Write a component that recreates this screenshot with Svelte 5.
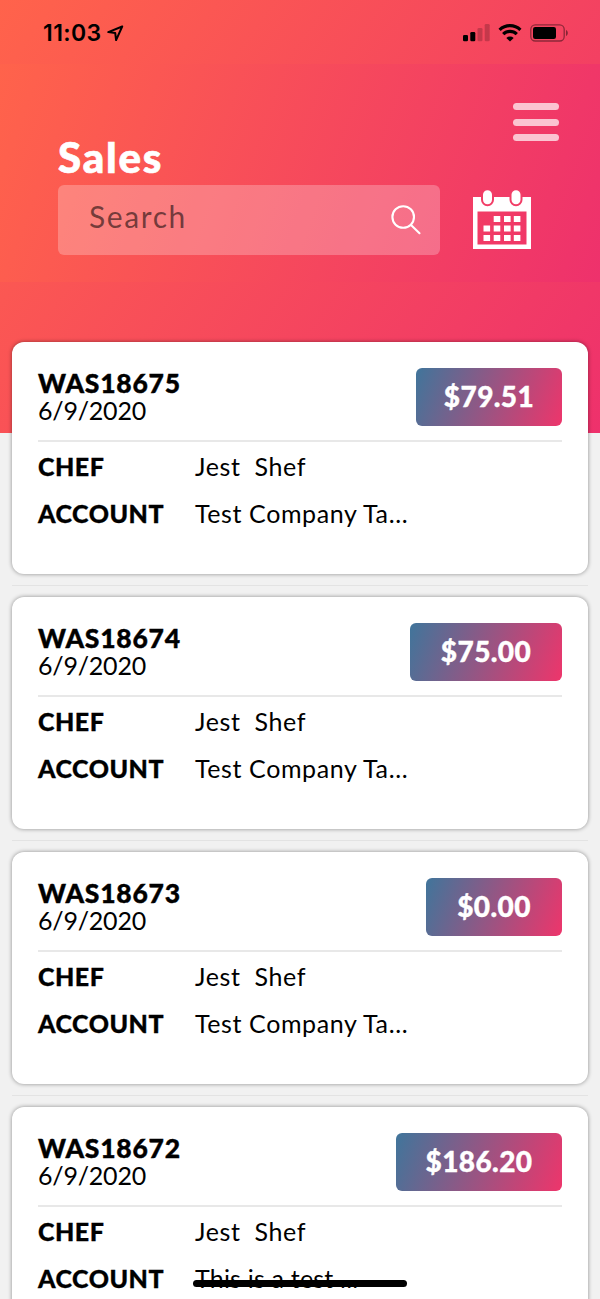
<script lang="ts">
  interface Sale {
    id: string
    date: string
    total: string
    chef: string
    account: string
    width: number
  }

  const sales: Sale[] = [
    { id: 'WAS18675', date: '6/9/2020', total: '$79.51', chef: 'Jest  Shef', account: 'Test Company Ta...', width: 146 },
    { id: 'WAS18674', date: '6/9/2020', total: '$75.00', chef: 'Jest  Shef', account: 'Test Company Ta...', width: 152 },
    { id: 'WAS18673', date: '6/9/2020', total: '$0.00', chef: 'Jest  Shef', account: 'Test Company Ta...', width: 136 },
    { id: 'WAS18672', date: '6/9/2020', total: '$186.20', chef: 'Jest  Shef', account: 'This is a test ...', width: 166 },
  ]

  // rows and first column of the day squares in the calendar icon
  const days = [
    { y: 47, from: 1 },
    { y: 56.5, from: 0 },
    { y: 66, from: 0 },
  ]
</script>

<div class="screen">
  <header>
    <div class="status">
      <span class="time">11:03</span>
      <svg class="location" width="17" height="17" viewBox="0 0 17 17">
        <path d="M15.2 1.5 1.3 7.1l6.9.8.9 7.2z" fill="none" stroke="#000" stroke-width="2" stroke-linejoin="round" />
      </svg>
      <svg class="signal" width="27" height="18" viewBox="0 0 27 18">
        <rect x="0" y="11" width="5" height="6.3" rx="1.3" />
        <rect x="7.3" y="8" width="5" height="9.3" rx="1.3" />
        <rect x="14.5" y="4" width="5" height="13.3" rx="1.3" opacity=".2" />
        <rect x="21.7" y="0" width="5" height="17.3" rx="1.3" opacity=".2" />
      </svg>
      <svg class="wifi" width="24" height="18" viewBox="0 0 24 18">
        <g fill="none" stroke="#000" stroke-width="3.2">
          <path d="M1.6 5.8a15 15 0 0 1 20.8 0" />
          <path d="M5.2 10.2a9.8 9.8 0 0 1 13.6 0" />
        </g>
        <path d="M8.3 13.9a5.4 5.4 0 0 1 7.4 0L12 17.6z" />
      </svg>
      <svg class="battery" width="39" height="18" viewBox="0 0 39 18">
        <rect x=".8" y=".8" width="33.4" height="16.2" rx="4.5" fill="none" stroke="#000" stroke-width="1.3" opacity=".42" />
        <rect x="3" y="3" width="23" height="12" rx="2.2" />
        <path d="M36 6v6c2.4-1 2.4-5 0-6z" opacity=".45" />
      </svg>
    </div>

    <div class="toolbar">
      <button class="menu" aria-label="Menu"><i></i><i></i><i></i></button>
      <h1>Sales</h1>
      <div class="tools">
        <div class="search">
          <span>Search</span>
          <svg width="32" height="32" viewBox="0 0 32 32" fill="none" stroke="#fff" stroke-width="2.1" stroke-linecap="round">
            <circle cx="13.2" cy="13" r="10.8" />
            <path d="M21 21l8.5 8.2" />
          </svg>
        </div>
        <svg class="calendar" width="58" height="60" viewBox="0 20 58 60">
          <path d="M0 27h58v52H0zM4.5 41.5v33h49v-33z" fill="#fff" fill-rule="evenodd" />
          <g fill="#fff" stroke="#f23d66" stroke-width="2">
            <rect x="9" y="19.2" width="11" height="16" rx="5.5" />
            <rect x="37.5" y="19.2" width="11" height="16" rx="5.5" />
          </g>
          {#each days as row}
            {#each [10.5, 20.7, 31, 40.8].slice(row.from) as x}
              <rect {x} y={row.y - 1} width="6.6" height="6" fill="#fff" />
            {/each}
          {/each}
        </svg>
      </div>
    </div>
  </header>

  <main>
    {#each sales as sale (sale.id)}
      <article>
        <div class="top">
          <div>
            <h2>{sale.id}</h2>
            <p class="date">{sale.date}</p>
          </div>
          <div class="total" style="width: {sale.width}px">{sale.total}</div>
        </div>
        <dl>
          <dt>CHEF</dt>
          <dd>{sale.chef}</dd>
          <dt>ACCOUNT</dt>
          <dd>{sale.account}</dd>
        </dl>
      </article>
      <hr />
    {/each}
  </main>

  <div class="home-bar"></div>
</div>

<style>
  :global(body) {
    margin: 0;
    background: #f1f1f1;
  }

  .screen {
    position: relative;
    width: 600px;
    height: 1299px;
    overflow: hidden;
    background: #f1f1f1;
    color: #000;
    font-family: Lato, sans-serif;
  }

  h1,
  h2,
  p,
  dl,
  dd {
    margin: 0;
  }

  header {
    height: 433px;
    background: linear-gradient(125.8deg, #ff634b, #ee316c);
  }

  .status {
    display: flex;
    height: 64px;
    box-sizing: border-box;
    padding: 24px 31px 0 43px;
  }

  .time {
    width: 64px;
    margin-top: -5px;
    font: 600 23px/28px Inter, sans-serif;
    letter-spacing: 0.4px;
  }

  .location {
    margin-top: 1px;
  }

  .signal {
    margin-left: auto;
  }

  .wifi {
    margin-left: 8px;
  }

  .battery {
    margin-left: 8px;
  }

  .toolbar {
    display: flex;
    flex-direction: column;
    height: 218px;
    box-sizing: border-box;
    padding: 39px 41px 0 58px;
    background: linear-gradient(110deg, #ff634b, #ee316c);
  }

  .menu {
    display: flex;
    flex-direction: column;
    align-self: flex-end;
    gap: 8.5px;
    padding: 0;
    border: 0;
    background: none;
  }

  .menu i {
    width: 46.5px;
    height: 7px;
    border-radius: 4px;
    background: rgba(255, 255, 255, 0.7);
  }

  h1 {
    height: 44px;
    color: #fff;
    font-size: 42px;
    font-weight: 900;
    line-height: 32px;
    letter-spacing: 1.8px;
    -webkit-text-stroke: 0.7px #fff;
  }

  .tools {
    display: flex;
    justify-content: space-between;
    padding-right: 28.5px;
  }

  .search {
    display: flex;
    justify-content: space-between;
    width: 382px;
    height: 70px;
    box-sizing: border-box;
    padding: 19px 18.5px 0 31px;
    border-radius: 6px;
    background: rgba(255, 255, 255, 0.25);
    color: rgba(0, 0, 0, 0.55);
    font-size: 30px;
    line-height: 25px;
    letter-spacing: 1.6px;
  }

  .calendar {
    margin-top: 5px;
  }

  main {
    position: relative;
    margin: -91px 12px 0;
  }

  article {
    height: 232px;
    box-sizing: border-box;
    padding: 26px;
    border-radius: 12px;
    background: #fff;
    box-shadow: 0 0 4px rgba(0, 0, 0, 0.42);
  }

  hr {
    height: 1px;
    margin: 11px 0;
    border: 0;
    background: #e3e3e3;
  }

  .top {
    display: flex;
    justify-content: space-between;
    height: 72px;
    border-bottom: 2px solid #e8e8e8;
  }

  h2 {
    margin-top: 2px;
    font-size: 26.5px;
    font-weight: 900;
    line-height: 27px;
    letter-spacing: 0.75px;
    -webkit-text-stroke: 0.4px #000;
  }

  .date {
    font-size: 25px;
    line-height: 27px;
    letter-spacing: -0.2px;
  }

  .total {
    height: 58px;
    border-radius: 6px;
    background: linear-gradient(111deg, #40759b, #ee356b);
    color: #fff;
    font-size: 28px;
    font-weight: 900;
    line-height: 56px;
    letter-spacing: 0.4px;
    text-align: center;
    -webkit-text-stroke: 0.4px #fff;
  }

  dl {
    display: grid;
    grid-template-columns: 157px 1fr;
    padding-top: 1px;
    font-size: 25px;
    line-height: 46.5px;
  }

  dt {
    font-weight: 900;
    letter-spacing: 0.5px;
    -webkit-text-stroke: 0.3px #000;
  }

  dd {
    letter-spacing: 0.6px;
    white-space: pre;
  }

  article:last-of-type dd:last-child {
    letter-spacing: 0.2px;
  }

  .home-bar {
    position: absolute;
    left: 193px;
    bottom: 12px;
    width: 214px;
    height: 7px;
    border-radius: 4px;
    background: #000;
  }
</style>
